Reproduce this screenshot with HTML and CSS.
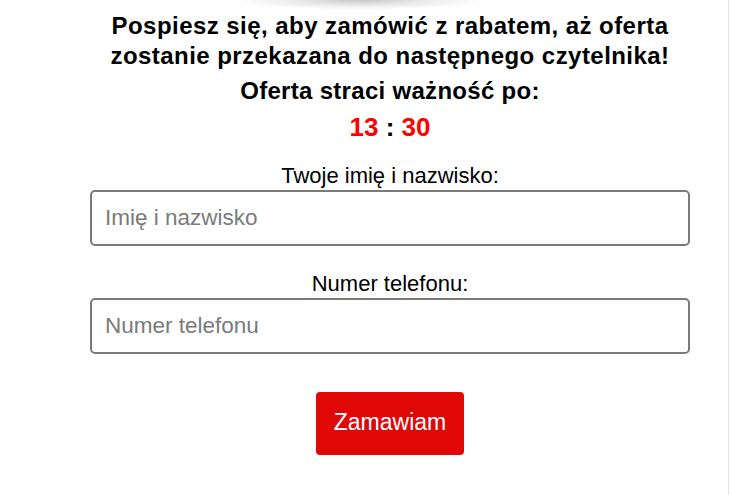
FILE: index.html
```html
<!DOCTYPE html>
<html lang="pl">
<head>
<meta charset="utf-8">
<title>Zamówienie</title>
<link rel="stylesheet" href="styles.css">
</head>
<body>
<div class="page">
  <div class="shade"></div>
  <form class="order">
    <p class="headline">Pospiesz się, aby zamówić z rabatem, aż oferta zostanie przekazana do następnego czytelnika!</p>
    <p class="expire">Oferta straci ważność po:</p>
    <p class="timer"><span class="num">13</span> : <span class="num">30</span></p>
    <label class="field-label" for="name">Twoje imię i nazwisko:</label>
    <input class="field" id="name" type="text" placeholder="Imię i nazwisko">
    <label class="field-label second" for="phone">Numer telefonu:</label>
    <input class="field" id="phone" type="tel" placeholder="Numer telefonu">
    <div class="actions">
      <button class="submit" type="button">Zamawiam</button>
    </div>
  </form>
</div>
</body>
</html>
```

FILE: styles.css
```css
html, body {
  margin: 0;
  padding: 0;
  background: #ffffff;
}
body {
  font-family: "Liberation Sans", Arial, sans-serif;
  color: #000;
}
.page {
  width: 728px;
  height: 495px;
  border-right: 1px solid #dbe5f5;
  overflow: hidden;
}
.shade {
  height: 11px;
  background: radial-gradient(ellipse 125px 10px at 360px 0, rgba(0,0,0,0.22), rgba(0,0,0,0.08) 55%, rgba(0,0,0,0) 100%);
}
.order {
  width: 600px;
  margin-left: 90px;
  display: flex;
  flex-direction: column;
  align-items: stretch;
  text-align: center;
}
.headline {
  margin: 0;
  font-size: 24px;
  font-weight: bold;
  line-height: 30px;
  letter-spacing: 0.45px;
}
.expire {
  margin: 5px 0 0;
  font-size: 24px;
  font-weight: bold;
  line-height: 30px;
  letter-spacing: 0.3px;
}
.timer {
  margin: 5px 0 0;
  font-size: 26px;
  font-weight: bold;
  line-height: 32px;
}
.num {
  color: #ff0000;
}
.field-label {
  display: block;
  margin-top: 21px;
  font-size: 22px;
  line-height: 24px;
}
.field-label.second {
  margin-top: 26px;
}
.field {
  margin-top: 2px;
  height: 56px;
  box-sizing: border-box;
  border: 2px solid #7b7b7b;
  border-radius: 5px;
  padding: 0 13px;
  font-family: "Liberation Sans", Arial, sans-serif;
  font-size: 22.5px;
  color: #000;
  outline: none;
}
.field::placeholder {
  color: #7a7a7a;
}
.actions {
  display: flex;
  justify-content: center;
  margin-top: 38px;
}
.submit {
  width: 148px;
  height: 63px;
  border: none;
  border-radius: 4px;
  background: #e00707;
  color: #fff;
  font-family: "Liberation Sans", Arial, sans-serif;
  font-size: 23px;
  padding: 0 0 2px;
  cursor: pointer;
}
```
